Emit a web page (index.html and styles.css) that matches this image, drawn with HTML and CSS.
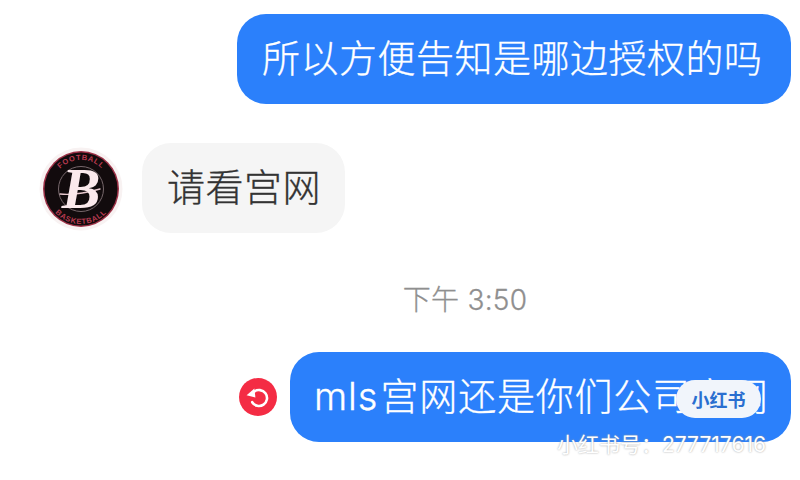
FILE: index.html
```html
<!DOCTYPE html>
<html lang="zh">
<head>
<meta charset="utf-8">
<title>Chat</title>
<link rel="stylesheet" href="styles.css">
</head>
<body>
<main class="chat">
  <div class="row row-out first">
    <div class="bubble out b1">所以方便告知是哪边授权的吗</div>
  </div>
  <div class="row row-in">
    <svg class="avatar" viewBox="0 0 84 84" width="84" height="84" aria-hidden="true">
      <defs>
        <path id="arcTop" d="M13 42a29 29 0 0 1 58 0"/>
        <path id="arcBot" d="M7 42a35 35 0 0 0 70 0"/>
      </defs>
      <circle cx="42" cy="42" r="41.5" fill="#f8f2f2"/>
      <circle cx="42" cy="42" r="38" fill="#9c3046"/>
      <circle cx="42" cy="42" r="36.5" fill="#120b0d"/>
      <circle cx="42" cy="42" r="22.5" fill="none" stroke="#77686c" stroke-width="1"/>
      <text class="logo-arc"><textPath href="#arcTop" startOffset="50%" text-anchor="middle">FOOTBALL</textPath></text>
      <text class="logo-arc"><textPath href="#arcBot" startOffset="50%" text-anchor="middle">BASKETBALL</textPath></text>
      <path d="M21 47c10 1 26-1 40-5" fill="none" stroke="#e9c9cf" stroke-width="1.4" stroke-linecap="round"/>
      <text class="logo-b" x="42" y="61" text-anchor="middle">B</text>
    </svg>
    <div class="bubble in b2">请看宫网</div>
  </div>
  <div class="time">下午 3:50</div>
  <div class="row row-out">
    <svg class="retry" viewBox="0 0 38 38" width="38" height="38" aria-hidden="true">
      <circle cx="19" cy="19" r="19" fill="#f42c44"/>
      <path d="M15 13.8A8 8 0 1 1 13.2 24.2" fill="none" stroke="#fff" stroke-width="2.6" stroke-linecap="round"/>
      <path d="M7.6 17.2L15.4 10.6L16.4 19.6Z" fill="#fff"/>
    </svg>
    <div class="bubble out b3">mls 宫网还是你们公司官网</div>
  </div>
  <div class="badge"><span>小红书</span></div>
  <div class="watermark">小红书号：277717616</div>
</main>
</body>
</html>
```
FILE: styles.css
```css
html, body {
  margin: 0;
  padding: 0;
  width: 800px;
  height: 480px;
  overflow: hidden;
  background: #fff;
}
.chat {
  position: relative;
  width: 800px;
  height: 480px;
  box-sizing: border-box;
  padding: 14px 9px 0 38px;
  display: flex;
  flex-direction: column;
  font-family: "Inter", "Noto Sans CJK SC", "Noto Sans", sans-serif;
}
.row {
  display: flex;
  align-items: center;
}
.row-out {
  justify-content: flex-end;
}
.row-in {
  margin-top: 39px;
  gap: 20px;
}
.bubble {
  height: 90px;
  box-sizing: border-box;
  display: flex;
  align-items: center;
  border-radius: 29px;
  font-size: 38px;
  font-weight: 300;
  -webkit-text-stroke: 0.3px currentColor;
  letter-spacing: 0.5px;
  white-space: nowrap;
  padding-bottom: 7px;
}
.out {
  background: #2b80fb;
  color: #fff;
}
.in {
  background: #f5f5f5;
  color: #333;
}
.b1 {
  width: 554px;
  padding-left: 25px;
}
.b2 {
  width: 203px;
  padding-left: 25px;
}
.b3 {
  width: 501px;
  padding-left: 24px;
  margin-left: 13px;
  letter-spacing: 0.8px;
  word-spacing: -9px;
}
.avatar {
  flex: none;
  width: 84px;
  height: 84px;
  margin: 2px -1px 0 1px;
}
.retry {
  flex: none;
}
.logo-arc {
  font-family: "Liberation Sans", sans-serif;
  font-size: 7.5px;
  font-weight: 700;
  letter-spacing: 0.7px;
  fill: #b83a50;
}
.logo-b {
  font-family: "Liberation Serif", serif;
  font-style: italic;
  font-weight: 700;
  font-size: 58px;
  fill: #fbe9ec;
}
.time {
  margin-top: 47px;
  margin-bottom: 32px;
  height: 40px;
  line-height: 40px;
  text-align: center;
  padding-left: 101px;
  font-size: 28px;
  font-weight: 300;
  letter-spacing: 0.25px;
  -webkit-text-stroke: 0.3px currentColor;
  color: #8f8f8f;
}
.badge {
  position: absolute;
  left: 676px;
  top: 380px;
  width: 85px;
  height: 38px;
  border-radius: 19px;
  background: #f1f5fb;
  display: flex;
  align-items: center;
  justify-content: center;
  font-size: 18px;
  font-weight: 700;
  color: #2a6fd0;
}
.watermark {
  position: absolute;
  left: 557px;
  top: 430px;
  font-size: 21px;
  line-height: 30px;
  color: #fff;
  white-space: nowrap;
  text-shadow: 0 0 2px #9a9a9a;
}
```
